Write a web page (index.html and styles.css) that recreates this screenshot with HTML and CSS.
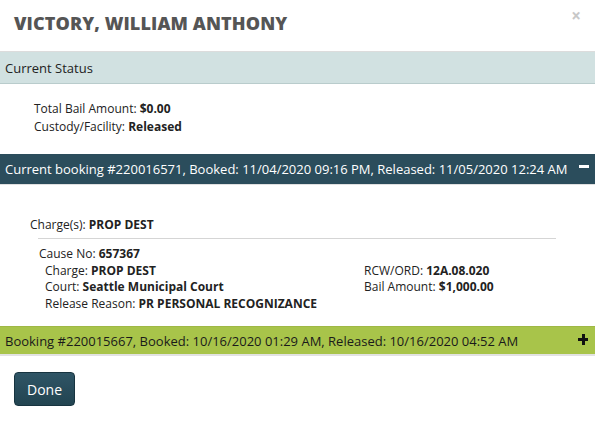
FILE: index.html
```html
<!DOCTYPE html>
<html>
<head>
<meta charset="utf-8">
<link rel="stylesheet" href="styles.css">
</head>
<body>
<div class="modal">
  <div class="modal-header">
    <h1 class="title">VICTORY, WILLIAM ANTHONY</h1>
    <span class="close">×</span>
  </div>
  <div class="section-bar status-bar">Current Status</div>
  <div class="status-body">
    <div>Total Bail Amount: <b>$0.00</b></div>
    <div>Custody/Facility: <b>Released</b></div>
  </div>
  <div class="section-bar booking-current">
    <span>Current booking #220016571, Booked: 11/04/2020 09:16 PM, Released: 11/05/2020 12:24 AM</span>
    <span class="minus"></span>
  </div>
  <div class="booking-body">
    <div class="charges">Charge(s): <b>PROP DEST</b></div>
    <div class="charge-detail">
      <div class="cause">Cause No: <b>657367</b></div>
      <div class="detail-grid">
        <div>Charge: <b>PROP DEST</b></div>
        <div>RCW/ORD: <b>12A.08.020</b></div>
        <div>Court: <b>Seattle Municipal Court</b></div>
        <div>Bail Amount: <b>$1,000.00</b></div>
        <div class="wide">Release Reason: <b>PR PERSONAL RECOGNIZANCE</b></div>
      </div>
    </div>
  </div>
  <div class="section-bar booking-old">
    <span>Booking #220015667, Booked: 10/16/2020 01:29 AM, Released: 10/16/2020 04:52 AM</span>
    <span class="plus"></span>
  </div>
  <div class="footer">
    <button class="done">Done</button>
  </div>
</div>
</body>
</html>
```
FILE: styles.css
```css
html, body {
  margin: 0;
  padding: 0;
  background: #fff;
}
body {
  font-family: "Open Sans", "Liberation Sans", sans-serif;
  font-size: 12px;
  color: #222;
}
.modal {
  width: 595px;
}
.modal-header {
  display: flex;
  justify-content: space-between;
  align-items: flex-start;
  height: 52px;
  border-bottom: 1px solid #dcdcdc;
  box-sizing: border-box;
}
.title {
  margin: 0;
  padding: 10px 0 0 14px;
  font-size: 18px;
  line-height: 26px;
  font-weight: 800;
  color: #555;
  letter-spacing: 0.1px;
}
.close {
  font-size: 17px;
  font-weight: 700;
  color: #c8c8c8;
  margin: 7px 14px 0 0;
  line-height: 1;
}
.section-bar {
  display: flex;
  justify-content: space-between;
  align-items: center;
  font-size: 13px;
  padding: 0 5px;
  box-sizing: border-box;
}
.status-bar {
  height: 32px;
  background: #d1e1e1;
  border-bottom: 1px solid #b9cccc;
  color: #222;
}
.status-body {
  padding: 16px 0 0 34px;
  height: 70px;
  box-sizing: border-box;
  line-height: 17.5px;
}
.booking-current {
  height: 31px;
  background: #2b4d5c;
  color: #fff;
  border-bottom: 1px solid #e0e0e0;
}
.minus {
  width: 10px;
  height: 3px;
  background: #fff;
  margin-right: 1px;
  margin-bottom: 5px;
}
.booking-body {
  height: 141px;
  box-sizing: border-box;
  padding: 31px 0 0 0;
}
.charges {
  padding-left: 30px;
  line-height: 17px;
}
.charge-detail {
  margin: 5px 39px 0 38px;
  border-top: 1px solid #d5d5d5;
  padding-top: 7px;
  line-height: 16.6px;
}
.cause {
  padding-left: 1px;
}
.detail-grid {
  display: grid;
  grid-template-columns: 319px 1fr;
  padding-left: 7px;
}
.detail-grid .wide {
  grid-column: 1 / 3;
}
.booking-old {
  height: 30px;
  background: #a8c44a;
  color: #1a1a1a;
  border-bottom: 2px solid #e2e2e2;
  border-top: 1px solid #9fb845;
}
.plus {
  position: relative;
  width: 10px;
  height: 10px;
  margin-right: 2px;
  margin-bottom: 4px;
}
.plus::before, .plus::after {
  content: "";
  position: absolute;
  background: #111;
}
.plus::before {
  left: 0; top: 4px; width: 10px; height: 3px;
}
.plus::after {
  left: 4px; top: 0; width: 3px; height: 11px;
}
.footer {
  padding: 16px 0 0 14px;
}
.done {
  font-family: "Open Sans", "Liberation Sans", sans-serif;
  font-size: 14px;
  color: #fff;
  width: 61px;
  height: 34px;
  border: 1px solid #173440;
  border-radius: 4px;
  background: linear-gradient(#2f5566, #224451);
  padding: 0;
}
```
